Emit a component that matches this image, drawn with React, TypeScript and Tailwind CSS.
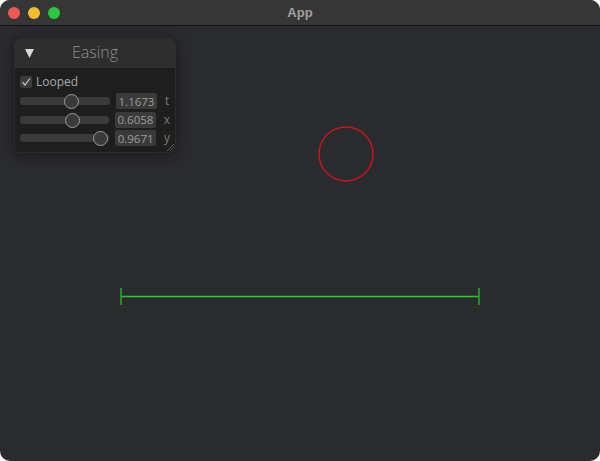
import { useState } from "react";

const params = [
    { label: "t", value: "1.1673", pos: 51 },
    { label: "x", value: "0.6058", pos: 52 },
    { label: "y", value: "0.9671", pos: 80 },
];

function Slider({ pos }: { pos: number }) {
    return (
        <div className="relative h-[16px] w-[90px] flex items-center">
            <div className="h-[8px] w-full rounded-[3px] bg-[#3a3a3a]" />
            <div
                className="absolute top-[1px] h-[15px] w-[15px] rounded-full border-[1.5px] border-[#9a9a9a] bg-[#3a3a3a]"
                style={{ left: pos - 7 }}
            />
        </div>
    );
}

export default function App() {
    const [looped, setLooped] = useState(true);

    return (
        <div className="h-[461px] w-[600px] bg-white font-['Open_Sans',sans-serif]">
            <div className="flex h-full w-full flex-col overflow-hidden rounded-[10px] bg-[#2a2b2f]">
                {/* Title bar */}
                <div className="relative flex h-[26px] shrink-0 items-center justify-center border-b border-[#151515] bg-[#363636]">
                    <div className="absolute left-[8px] top-[7px] flex gap-[8px]">
                        <div className="h-[12px] w-[12px] rounded-full bg-[#ee5a52]" />
                        <div className="h-[12px] w-[12px] rounded-full bg-[#f5bb2e]" />
                        <div className="h-[12px] w-[12px] rounded-full bg-[#2bc73f]" />
                    </div>
                    <span className="font-['Liberation_Sans',sans-serif] text-[13px] font-bold text-[#a0a0a0]">App</span>
                </div>

                {/* Canvas */}
                <div className="relative flex-1">
                    <svg className="absolute inset-0" width="600" height="435">
                        <circle cx="346" cy="128" r="27" fill="none" stroke="#c4161c" strokeWidth="1.5" />
                        <line x1="121" y1="270.5" x2="479" y2="270.5" stroke="#2ad02a" strokeWidth="1.3" />
                        <line x1="121" y1="262" x2="121" y2="279" stroke="#22aa22" strokeWidth="1.6" />
                        <line x1="479" y1="262" x2="479" y2="279" stroke="#22aa22" strokeWidth="1.6" />
                    </svg>

                    {/* Easing panel */}
                    <div className="absolute left-[14px] top-[12px] w-[162px] overflow-hidden rounded-[6px] border border-[#2c2c2c] bg-[#1e1e1e] shadow-[0_2px_14px_rgba(0,0,0,0.45)]">
                        <div className="relative flex h-[30px] items-center justify-center border-b border-[#1a1a1a] bg-[#2e2e2e]">
                            <svg className="absolute left-[10px] top-[10px]" width="9" height="9" viewBox="0 0 9 9">
                                <polygon points="0,0 9,0 4.5,9" fill="#d8d8d8" />
                            </svg>
                            <span className="-mt-[3px] text-[16px] font-light text-[#8c8c8c]">Easing</span>
                        </div>
                        <div className="relative flex flex-col px-[5px] pb-[5px] pt-[6px] text-[12px] text-[#a8a8a8]">
                            <button
                                onClick={() => setLooped(!looped)}
                                className="mb-[2px] flex h-[14px] items-center gap-[4px]"
                            >
                                <span className="flex h-[12px] w-[12px] items-center justify-center rounded-[2px] bg-[#3c3c3c]">
                                    {looped && (
                                        <svg width="10" height="10" viewBox="0 0 10 10">
                                            <path d="M1.5 5.2 L4 8 L8.8 1.5" fill="none" stroke="#c8c8c8" strokeWidth="1.2" />
                                        </svg>
                                    )}
                                </span>
                                <span>Looped</span>
                            </button>
                            {params.map((p) => (
                                <div key={p.label} className="mt-[2px] flex h-[16.5px] items-center gap-[6px]">
                                    <Slider pos={p.pos} />
                                    <div className="flex h-[16px] w-[41px] items-center justify-center rounded-[2px] bg-[#3a3a3a] text-[11.5px] text-[#9c9c9c]">
                                        {p.value}
                                    </div>
                                    <span className="ml-[2px] text-[12px] text-[#7c7c7c]">{p.label}</span>
                                </div>
                            ))}
                            <svg className="absolute bottom-[1px] right-[1px]" width="8" height="8" viewBox="0 0 8 8">
                                <path d="M8 1 L1 8 M8 4 L4 8 M8 7 L7 8" stroke="#555" strokeWidth="1" />
                            </svg>
                        </div>
                    </div>
                </div>
            </div>
        </div>
    );
}
